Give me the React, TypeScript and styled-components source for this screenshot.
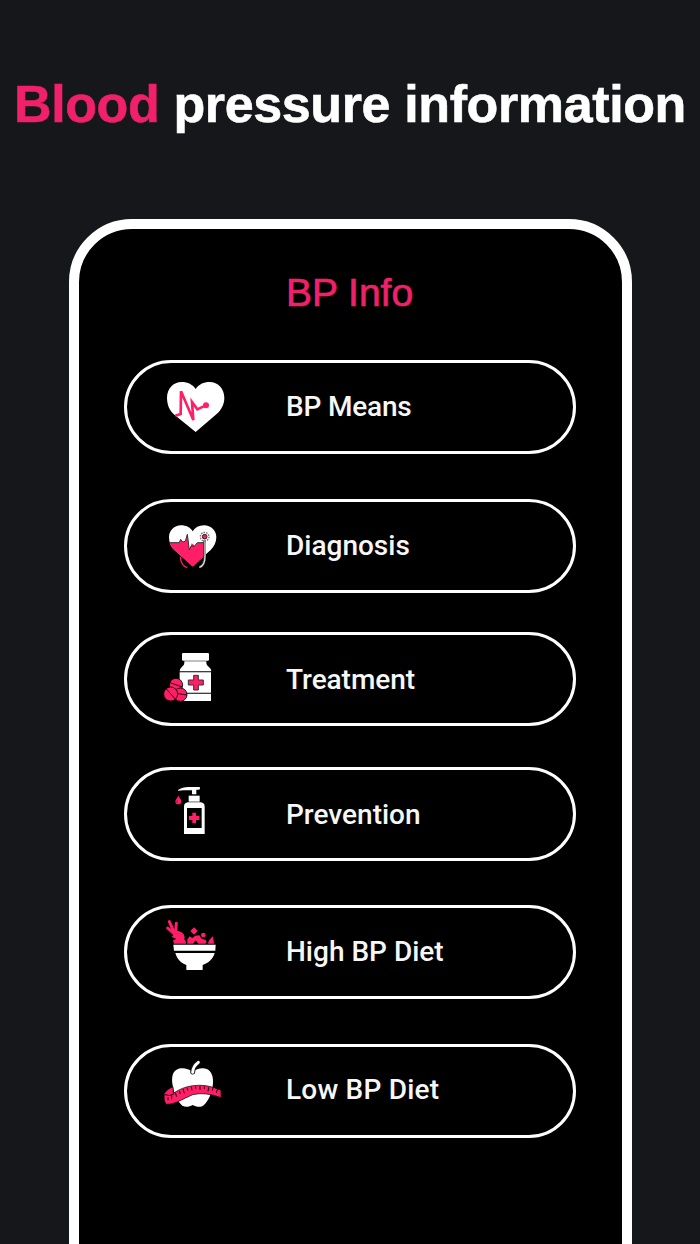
import React from 'react';
import styled, { createGlobalStyle } from 'styled-components';

const PINK = '#f02168';
const HOT = '#ff1e67';

const GlobalStyle = createGlobalStyle`
  * { box-sizing: border-box; }
  body { margin: 0; background: #16171b; }
`;

const Page = styled.main`
  display: flex;
  flex-direction: column;
  align-items: center;
  width: 700px;
  height: 1244px;
  overflow: hidden;
  background: #16171b;
`;

const Headline = styled.h1`
  margin: 0;
  padding-top: 74px;
  height: 219px;
  flex: none;
  font: 700 52px/60px 'Liberation Sans', Arial, sans-serif;
  letter-spacing: -0.38px;
  -webkit-text-stroke: 0.6px currentColor;
  color: #fff;
  white-space: nowrap;
`;

const Accent = styled.span`
  color: ${PINK};
`;

const Phone = styled.section`
  display: flex;
  flex-direction: column;
  align-items: center;
  flex: none;
  width: 563px;
  height: 1100px;
  border: 10px solid #fff;
  border-radius: 63px;
  background: #000;
`;

const ScreenTitle = styled.h2`
  margin: 0;
  padding: 42px 1px 0 0;
  height: 131px;
  font: 400 39px/44px 'Liberation Sans', Arial, sans-serif;
  -webkit-text-stroke: 0.7px currentColor;
  color: ${PINK};
  white-space: nowrap;
`;

const Menu = styled.nav`
  display: flex;
  flex-direction: column;
`;

const Pill = styled.button<{ $gap: number }>`
  display: flex;
  align-items: center;
  gap: 51.5px;
  width: 452px;
  height: 94px;
  margin: 0 0 ${(p) => p.$gap}px;
  padding: 0 0 0 27.5px;
  border: 3px solid #fff;
  border-radius: 47px;
  background: #000;
`;

const Icon = styled.svg`
  flex: none;
  width: 80px;
  height: 88px;
`;

const Label = styled.span<{ $spacing: number; $drop: number }>`
  margin-top: ${(p) => p.$drop * 2}px;
  font: 500 28px/34px Roboto, 'Liberation Sans', sans-serif;
  letter-spacing: ${(p) => p.$spacing}px;
  color: #f7f7f7;
  white-space: nowrap;
`;

const HeartPulse = () => (
  <Icon viewBox="0 -21 240 264">
    <path
      fill="#fff"
      d="M122 186 L58 134 C43 121 36 103 36 83 C36 56 55 36 80 36 C98 36 114 44 122 57 C130 44 146 36 164 36 C189 36 208 56 208 83 C208 103 199 119 185 132 Z"
    />
    <path fill="none" stroke={HOT} strokeWidth="8" d="M61 137 L77 132 L78 64 L115 150 L111 96 L127 118 L152 106" />
    <circle cx="153" cy="106" r="9" fill={HOT} />
  </Icon>
);

const HeartStethoscope = () => (
  <Icon viewBox="0 -39 240 264">
    <path
      fill="#fff"
      d="M113 153 L58 105 C47 95 42 82 42 67 C42 46 58 31 78 31 C93 31 106 37 113 49 C120 37 132 31 147 31 C168 31 184 46 184 67 C184 82 177 95 167 105 Z"
    />
    <path fill={HOT} d="M44 83 L73 83 L77 73 L83 81 L91 80 L97 58 L103 104 L110 85 L120 92 L127 83 L149 83 L149 123 L113 155 L58 105 C51 99 46 92 44 83Z" />
    <path fill="none" stroke="#333" strokeWidth="3" d="M43 83 H73 L77 73 L83 81 L91 79 L97 58 L103 105 L109 93 L118 94 L127 83 H147" />
    <path fill="none" stroke={HOT} strokeWidth="4" d="M76 125 C77 144 84 154 97 158" />
    <path fill="none" stroke="#333" strokeWidth="8" d="M149 76 V123 C149 145 143 154 133 157" />
    <path fill="none" stroke="#ddd" strokeWidth="4" d="M150 76 V123 C150 145 144 154 133 157" />
    <circle cx="149" cy="65" r="13" fill="none" stroke="#777" strokeWidth="4" strokeDasharray="5 3" />
    <circle cx="149" cy="65" r="7" fill={HOT} stroke="#222" strokeWidth="3" />
  </Icon>
);

const MedicineBottle = () => (
  <Icon viewBox="0 -30 240 264">
    <path fill="#fff" d="M84 24 H159 Q162 24 162 28 V43 Q162 47 159 47 H84 Q81 47 81 43 V28 Q81 24 84 24Z" />
    <path fill="#fff" d="M88 49 H154 V54 Q154 60 161 65 Q169 71 169 79 H74 Q74 71 81 65 Q88 60 88 54Z" />
    <path fill="#fff" d="M74 82 H168 V143 H74Z M92 146 H168 V168 H82 L94 157Z" />
    <path fill={HOT} stroke="#333" strokeWidth="3" d="M116 91 H130 V105 H145 V120 H130 V135 H116 V120 H100 V105 H116Z" />
    <g fill={HOT} stroke="#000" strokeWidth="2.5">
      <circle cx="63" cy="120" r="20" />
      <path d="M45 113 L82 126" />
      <circle cx="76" cy="149" r="20" />
      <path d="M63 145 L96 150" />
      <circle cx="47" cy="147" r="21" />
      <path d="M34 132 L62 163" />
    </g>
  </Icon>
);

const Sanitizer = () => (
  <Icon viewBox="-15 -30 240 264">
    <path fill="#fff" d="M54 30 C64 23 76 20 91 21 H118 Q120 21 120 25 Q120 29 117 29 H109 V43 H96 V31 H81 Q66 30 54 32Z" />
    <path fill="#fff" d="M86 47 H119 V65 H86Z" />
    <path fill="#fff" fillRule="evenodd" d="M84 67 H122 Q134 68 134 80 V162 H72 V80 Q72 68 84 67Z M81 84 V144 H125 V84Z" />
    <path fill={HOT} d="M97 98 H108 V108 H118 V120 H108 V130 H97 V120 H87 V108 H97Z" />
    <path fill={HOT} d="M55 46 C57 54 64 58 64 65 C64 70 60 73 55 73 C50 73 46 70 46 65 C46 58 54 54 55 46Z" />
    <path fill="none" stroke="#6b1030" strokeWidth="2" d="M52 61 Q49 65 52 69" />
  </Icon>
);

const SaladBowl = () => (
  <Icon viewBox="0 -6 240 264">
    <path fill="none" stroke={HOT} strokeWidth="9" strokeLinecap="round" d="M43 35 L55 62 M64 40 L62 64 M38 54 L57 71" />
    <path
      fill={HOT}
      d="M50 58 L66 62 Q80 64 86 73 Q91 82 88 88 L93 96 V101 H57 L54 91 L64 87 L50 80 L56 74Z"
    />
    <path fill={HOT} d="M97 101 V88 L104 79 L112 84 L121 77 L133 76 L140 86 L152 90 L155 96 L151 101 H130 L122 91 L114 101Z" />
    <path fill={HOT} d="M159 101 Q161 89 174 79 L177 101Z M117 52 L128 63 L117 74 L106 63Z" />
    <circle cx="145" cy="75" r="7" fill={HOT} />
    <path fill="#fff" d="M55 104 H182 L181 122 H57Z M61 129 H179 C174 147 162 158 143 165 V180 H94 V165 C76 158 66 146 61 129Z" />
  </Icon>
);

const AppleTape = () => (
  <Icon viewBox="0 -15 240 264">
    <path
      fill="#fff"
      d="M113 59 C99 49 79 45 65 53 C52 60 50 77 52 94 C55 121 66 147 82 161 C93 167 103 164 113 159 C124 165 137 167 146 160 C161 147 172 121 174 93 C175 75 170 59 157 52 C144 45 125 50 113 59Z"
    />
    <path fill="none" stroke="#111" strokeWidth="15" strokeLinecap="round" d="M113 60 Q114 42 129 32" />
    <path fill="none" stroke="#fff" strokeWidth="9" strokeLinecap="round" d="M113 61 Q114 43 130 31" />
    <path
      fill={HOT}
      stroke="#000"
      strokeWidth="2"
      d="M54 104 Q36 111 28 124 Q25 148 34 157 Q49 158 67 150 Q91 138 113 128 Q151 119 198 137 V115 Q156 95 113 101 Q80 106 55 124 Z"
    />
    <path fill="none" stroke="#26000d" strokeWidth="3" d="M30 128 Q43 134 57 126 M39 135 V145 M50 130 V142 M61 122 L65 134 M73 117 L76 126 M84 111 L88 124 M96 107 L99 116 M109 104 L111 115 M122 103 V111 M135 102 V114 M148 103 V111 M161 106 L159 118 M174 108 L172 116 M187 112 L184 123" />
  </Icon>
);

const items = [
  { label: 'BP Means', icon: HeartPulse, gap: 45, spacing: -0.2, drop: 0 },
  { label: 'Diagnosis', icon: HeartStethoscope, gap: 39, spacing: 0, drop: 0 },
  { label: 'Treatment', icon: MedicineBottle, gap: 41, spacing: -0.05, drop: 1 },
  { label: 'Prevention', icon: Sanitizer, gap: 44, spacing: 0, drop: 0.5 },
  { label: 'High BP Diet', icon: SaladBowl, gap: 45, spacing: 0, drop: 0 },
  { label: 'Low BP Diet', icon: AppleTape, gap: 0, spacing: 0.2, drop: -1 },
];

export default function App() {
  return (
    <Page>
      <GlobalStyle />
      <Headline>
        <Accent>Blood</Accent> pressure information
      </Headline>
      <Phone>
        <ScreenTitle>BP Info</ScreenTitle>
        <Menu>
          {items.map(({ label, icon: Glyph, gap, spacing, drop }) => (
            <Pill key={label} $gap={gap}>
              <Glyph />
              <Label $spacing={spacing} $drop={drop}>{label}</Label>
            </Pill>
          ))}
        </Menu>
      </Phone>
    </Page>
  );
}
